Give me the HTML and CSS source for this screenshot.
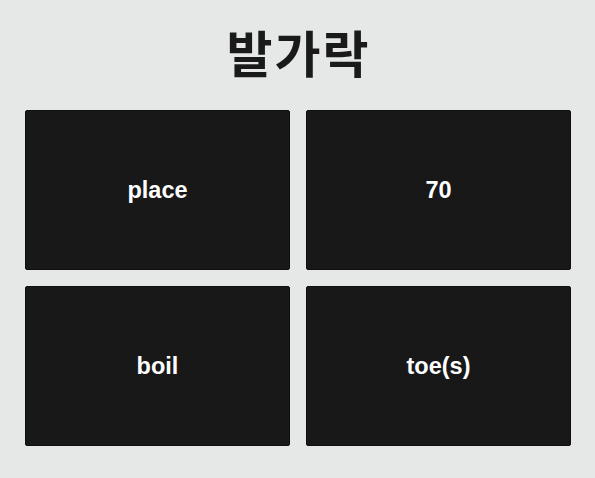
FILE: index.html
```html
<!DOCTYPE html>
<html lang="ko">
<head>
  <meta charset="UTF-8">
  <meta name="viewport" content="width=device-width, initial-scale=1.0">
  <title>발가락</title>
  <link rel="stylesheet" href="styles.css">
</head>
<body>
  <h1 class="word">발가락</h1>
  <div class="choices">
    <button class="choice">place</button>
    <button class="choice">70</button>
    <button class="choice">boil</button>
    <button class="choice">toe(s)</button>
  </div>
</body>
</html>
```

FILE: styles.css
```css
body {
  margin: 0;
  padding: 0 25px;
  background-color: #e6e8e7;
  font-family: "Liberation Sans", Arial, "Noto Sans CJK KR", sans-serif;
}
.word {
  margin: 21px 0 29px;
  height: 60px;
  line-height: 60px;
  text-align: center;
  font-family: "Noto Sans CJK KR", sans-serif;
  font-size: 50px;
  font-weight: bold;
  letter-spacing: 2px;
  text-indent: 2px;
  color: #1a1a1a;
}
.choices {
  display: grid;
  grid-template-columns: 265px 265px;
  grid-auto-rows: 160px;
  gap: 16px;
}
.choice {
  margin: 0;
  padding: 0;
  background-color: #181818;
  color: #fff;
  border: 1px solid #0f0f0f;
  border-radius: 2px;
  font-family: "Liberation Sans", Arial, sans-serif;
  font-size: 23.5px;
  font-weight: bold;
  cursor: pointer;
}
```
